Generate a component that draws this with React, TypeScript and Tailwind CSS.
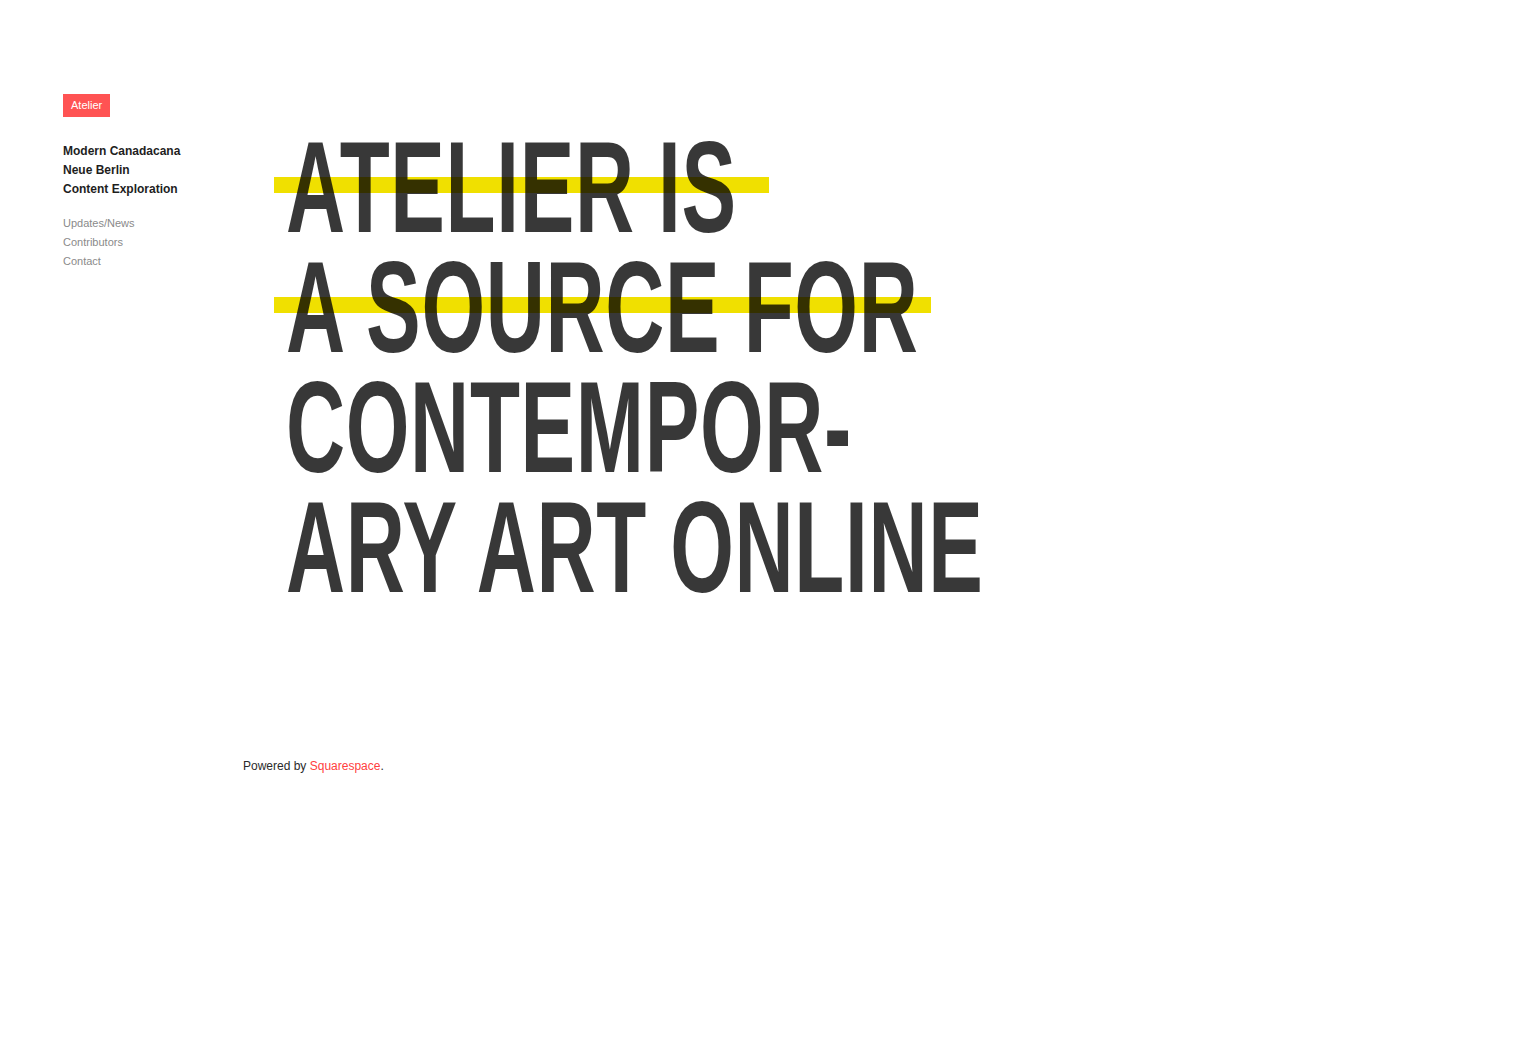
const lines = [
  { text: "ATELIER IS", bar: "w-[495px]" },
  { text: "A SOURCE FOR", bar: "w-[657px]" },
  { text: "CONTEMPOR-", bar: "" },
  { text: "ARY ART ONLINE", bar: "" },
];

const Sidebar = () => {
  return (
    <aside className="w-[243px] shrink-0 pl-[63px]">
      <div className="w-fit bg-[#ff5353] px-2 py-[5px] text-[11px] leading-[13px] text-white">
        Atelier
      </div>
      <ul className="mt-[25px] text-[12px] font-bold leading-[19px] text-[#1e1e1e]">
        <li>Modern Canadacana</li>
        <li>Neue Berlin</li>
        <li>Content Exploration</li>
      </ul>
      <ul className="mt-[15px] text-[11px] leading-[19px] text-[#8a8a8a]">
        <li>Updates/News</li>
        <li>Contributors</li>
        <li>Contact</li>
      </ul>
    </aside>
  );
};

const Headline = () => {
  return (
    <h1 className="pl-[43px] pt-[33px] font-bold">
      {lines.map((line) => (
        <div key={line.text} className="relative h-[120px] text-[130px] leading-[120px]">
          {line.bar && (
            <div className={`absolute left-[-12px] top-[50px] h-[16px] bg-[#f0e000] ${line.bar}`} />
          )}
          <span className="relative block origin-left scale-x-[0.63] whitespace-nowrap tracking-[1px] text-[rgba(0,0,0,0.78)]">
            {line.text}
          </span>
        </div>
      ))}
    </h1>
  );
};

export default function App() {
  return (
    <div className="min-h-screen bg-white pt-[94px] font-['Liberation_Sans',Arial,sans-serif]">
      <div className="flex">
        <Sidebar />
        <main className="flex-1">
          <Headline />
          <footer className="mt-[150px] text-[12px] leading-[18px] text-[#2a2a2a]">
            Powered by <a href="#" className="text-[#ff4040]">Squarespace</a>.
          </footer>
        </main>
      </div>
    </div>
  );
}
